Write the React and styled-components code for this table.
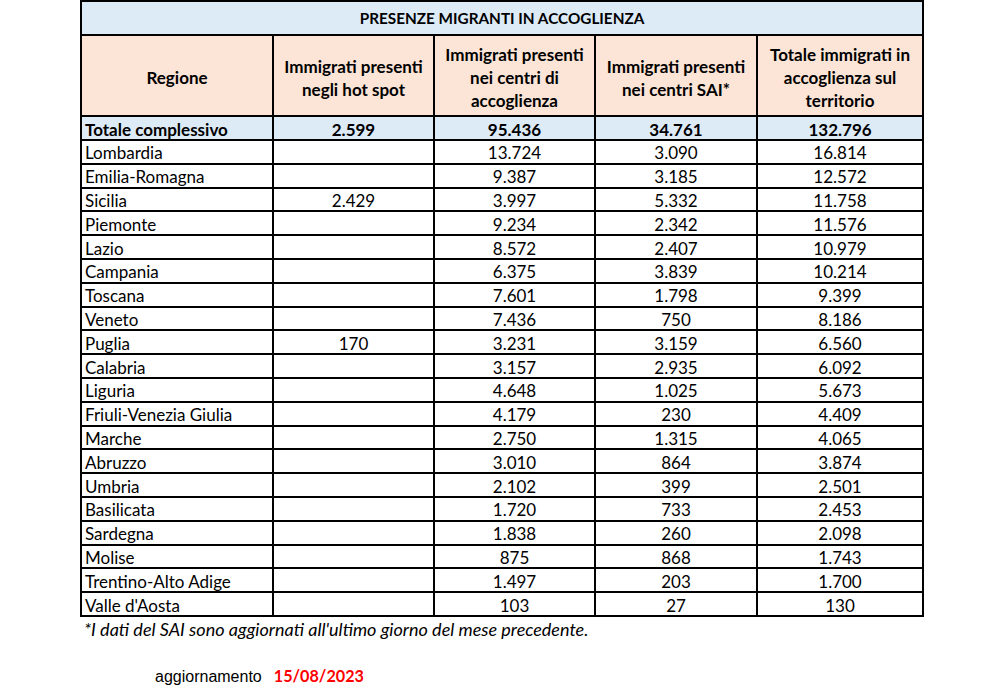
import React from "react";
import styled, { createGlobalStyle } from "styled-components";

const Global = createGlobalStyle`
  html, body { margin: 0; padding: 0; background: #ffffff; }
  body { font-family: Lato, "Liberation Sans", sans-serif; color: #000; }
`;

const Page = styled.div`
  width: 1007px;
  height: 689px;
  padding-left: 80px;
  box-sizing: border-box;
  overflow: hidden;
`;

const Table = styled.table`
  border-collapse: collapse;
  table-layout: fixed;
  width: 842px;
  font-family: Lato, sans-serif;
  font-size: 17px;
  border: 2px solid #000;
`;

const Row = styled.tr`
  height: ${(p) => p.$h || 23.8}px;
`;

const Cell = styled.td`
  border: 2px solid #000;
  padding: 2px 3px 0;
  text-align: ${(p) => (p.$left ? "left" : "center")};
  font-weight: ${(p) => (p.$bold ? 700 : 400)};
  background: ${(p) => p.$bg || "transparent"};
  line-height: 19px;
  white-space: nowrap;
  overflow: hidden;
  vertical-align: middle;
`;

const HeadCell = styled.th`
  border: 2px solid #000;
  padding: 4px 4px 0;
  height: 75px;
  background: #fce4d6;
  font-weight: 700;
  line-height: 23px;
  text-align: center;
  vertical-align: middle;
`;

const TitleCell = styled.th`
  border: 2px solid #000;
  height: 30px;
  background: #ddebf7;
  font-weight: 700;
  text-align: center;
  vertical-align: middle;
  font-size: 15.3px;
  padding-top: 1px;
`;

const Note = styled.div`
  font-family: Lato, sans-serif;
  font-style: italic;
  font-size: 18px;
  margin: 2px 0 0 4px;
  line-height: 20px;
`;

const Update = styled.div`
  display: flex;
  align-items: baseline;
  gap: 12px;
  margin: 27px 0 0 75px;
`;

const UpdateLabel = styled.span`
  font-family: "Liberation Sans", Arial, sans-serif;
  font-size: 16px;
`;

const UpdateDate = styled.span`
  font-family: Lato, sans-serif;
  font-weight: 700;
  font-size: 16.2px;
  color: #ff0000;
`;

const cols = [192, 161, 161, 162, 166];

const rows = [
  ["Lombardia", "", "13.724", "3.090", "16.814"],
  ["Emilia-Romagna", "", "9.387", "3.185", "12.572"],
  ["Sicilia", "2.429", "3.997", "5.332", "11.758"],
  ["Piemonte", "", "9.234", "2.342", "11.576"],
  ["Lazio", "", "8.572", "2.407", "10.979"],
  ["Campania", "", "6.375", "3.839", "10.214"],
  ["Toscana", "", "7.601", "1.798", "9.399"],
  ["Veneto", "", "7.436", "750", "8.186"],
  ["Puglia", "170", "3.231", "3.159", "6.560"],
  ["Calabria", "", "3.157", "2.935", "6.092"],
  ["Liguria", "", "4.648", "1.025", "5.673"],
  ["Friuli-Venezia Giulia", "", "4.179", "230", "4.409"],
  ["Marche", "", "2.750", "1.315", "4.065"],
  ["Abruzzo", "", "3.010", "864", "3.874"],
  ["Umbria", "", "2.102", "399", "2.501"],
  ["Basilicata", "", "1.720", "733", "2.453"],
  ["Sardegna", "", "1.838", "260", "2.098"],
  ["Molise", "", "875", "868", "1.743"],
  ["Trentino-Alto Adige", "", "1.497", "203", "1.700"],
  ["Valle d'Aosta", "", "103", "27", "130"],
];

export default function App() {
  return (
    <Page>
      <Global />
      <Table>
        <colgroup>
          {cols.map((w, i) => (
            <col key={i} style={{ width: w }} />
          ))}
        </colgroup>
        <thead>
          <tr>
            <TitleCell colSpan={5}>PRESENZE MIGRANTI IN ACCOGLIENZA</TitleCell>
          </tr>
          <tr>
            <HeadCell>Regione</HeadCell>
            <HeadCell>Immigrati presenti<br />negli hot spot</HeadCell>
            <HeadCell>Immigrati presenti<br />nei centri di<br />accoglienza</HeadCell>
            <HeadCell>Immigrati presenti<br />nei centri SAI*</HeadCell>
            <HeadCell>Totale immigrati in<br />accoglienza sul<br />territorio</HeadCell>
          </tr>
        </thead>
        <tbody>
          <Row $h={24}>
            <Cell $left $bold $bg="#ddebf7">Totale complessivo</Cell>
            <Cell $bold $bg="#ddebf7">2.599</Cell>
            <Cell $bold $bg="#ddebf7">95.436</Cell>
            <Cell $bold $bg="#ddebf7">34.761</Cell>
            <Cell $bold $bg="#ddebf7">132.796</Cell>
          </Row>
          {rows.map((r) => (
            <Row key={r[0]}>
              {r.map((v, i) => (
                <Cell key={i} $left={i === 0}>{v}</Cell>
              ))}
            </Row>
          ))}
        </tbody>
      </Table>
      <Note>*I dati del SAI sono aggiornati all'ultimo giorno del mese precedente.</Note>
      <Update>
        <UpdateLabel>aggiornamento</UpdateLabel>
        <UpdateDate>15/08/2023</UpdateDate>
      </Update>
    </Page>
  );
}
